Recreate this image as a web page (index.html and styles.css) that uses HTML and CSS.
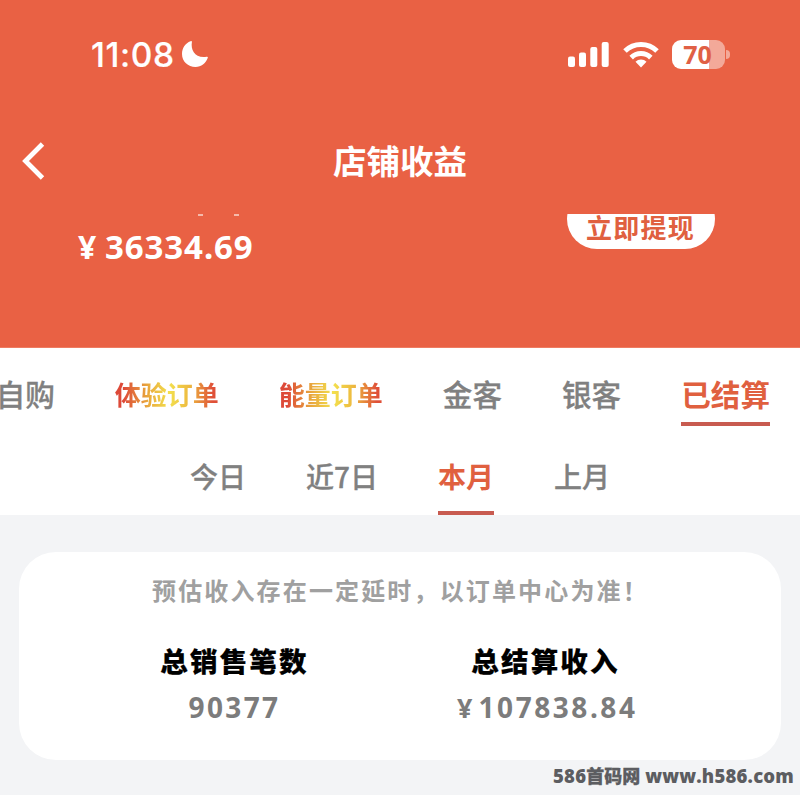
FILE: index.html
```html
<!DOCTYPE html>
<html lang="zh-CN">
<head>
<meta charset="utf-8">
<title>店铺收益</title>
<link rel="stylesheet" href="styles.css">
</head>
<body>
<header class="hero">
  <div class="status">
    <span class="time">11:08</span>
    <svg class="moon" width="28" height="28" viewBox="0 0 28 28"><path d="M9.500 1.200Q11 0.500 10.900 2C9.500 10 14 18.500 25.500 16.800Q27.400 16.500 26.700 18C24.500 23.500 20.500 27 14.500 27C7 27 1 21.500 1 14C1 8 4.500 3 9.500 1.200Z" fill="#fff"/></svg>
    <svg class="signal" width="42" height="26" viewBox="0 0 42 26" fill="#fff"><rect x="0" y="15.500" width="7" height="10.500" rx="2"/><rect x="11" y="11.500" width="7" height="14.500" rx="2"/><rect x="22.300" y="6" width="7" height="20" rx="2"/><rect x="33.700" y="1" width="7" height="25" rx="2"/></svg>
    <svg class="wifi" width="36" height="27" viewBox="0 0 36 27" fill="none" stroke="#fff" stroke-width="5"><path d="M2 10a22.800 22.800 0 0 1 32 0"/><path d="M8.200 16.600a14 14 0 0 1 19.600 0"/><path d="M18 26.500l-5.500-5.700a7.600 7.600 0 0 1 11 0z" fill="#fff" stroke="none"/></svg>
    <div class="battery"><span>70</span></div>
    <i class="battery-tip"></i>
  </div>
  <nav class="navbar">
    <svg class="back" width="24" height="38" viewBox="0 0 24 38"><path d="M20.500 2L3.500 19l17 17" fill="none" stroke="#fff" stroke-width="4.800"/></svg>
    <h1>店铺收益</h1>
  </nav>
  <section class="balance">
    <div class="amount"><div class="ticks"><i></i><i></i></div><div class="money"><span class="yen">¥</span>36334.69</div></div>
    <div class="withdraw-clip"><button class="withdraw">立即提现</button></div>
  </section>
</header>
<section class="filters">
  <div class="tabs">
    <span>自购</span><span class="gold">体验订单</span><span class="gold">能量订单</span><span>金客</span><span>银客</span><span class="active">已结算</span>
  </div>
  <div class="periods">
    <span>今日</span><span>近<b class="digit">7</b>日</span><span class="active">本月</span><span>上月</span>
  </div>
</section>
<main class="card">
  <p class="notice">预估收入存在一定延时，以订单中心为准！</p>
  <div class="stats">
    <div class="stat"><h2>总销售笔数</h2><div class="value">90377</div></div>
    <div class="stat"><h2>总结算收入</h2><div class="value wide"><span class="yen">¥</span>107838.84</div></div>
  </div>
</main>
<footer class="mark"><span>586<b class="han">首码网</b></span><span class="site">www.h586.com</span></footer>
</body>
</html>
```
FILE: styles.css
```css
* { box-sizing: border-box; margin: 0; padding: 0; }
body {
  width: 800px; height: 795px; overflow: hidden; background: #f3f4f6;
  font-family: "Noto Sans CJK SC", sans-serif;
}
.hero { height: 348px; background: #e96144; color: #fff; border-bottom: 1px solid #ee7c62; }
.status { display: flex; align-items: center; height: 108px; padding-left: 91px; }
.time { width: 89px; font: 500 33.500px/40px Inter, sans-serif; letter-spacing: 0.600px; padding-top: 1px; -webkit-text-stroke: 0.200px #fff; }
.moon { margin-left: 1px; }
.signal { margin-left: 359px; }
.wifi { margin-left: 13px; }
.battery {
  width: 53px; height: 29px; margin-left: 13px; padding-right: 2px; border-radius: 9px;
  background: linear-gradient(90deg, #fff 37px, #f3a999 37px);
  color: #e06045; font: 700 25px/28px "Open Sans", sans-serif; text-align: center;
}
.battery-tip { width: 4px; height: 9px; margin-left: 1px; border-radius: 0 5px 5px 0; background: #f3a999; }
.navbar { display: flex; align-items: center; height: 106px; }
.back { margin-left: 22px; }
.navbar h1 { width: 708px; margin-top: -2px; text-align: center; font-size: 33.500px; line-height: 48px; font-weight: 700; }
.balance { display: flex; justify-content: space-between; padding: 0 85px 0 78px; }
.ticks { display: flex; gap: 31px; height: 13px; padding-left: 120px; }
.ticks i { width: 5px; height: 2px; background: #f5b9aa; }
.money { font: 700 33px/40px "Noto Sans", sans-serif; letter-spacing: 0.900px; white-space: nowrap; }
.money .yen { display: inline-block; width: 27px; font-size: 32px; }
.withdraw-clip { height: 35px; width: 148px; overflow: hidden; display: flex; align-items: flex-end; }
.withdraw {
  flex: none; width: 148px; height: 60px; padding: 19px 1px 3px 0; border: 0; border-radius: 30px; background: #fff;
  color: #e0603f; font: 700 26px/38px "Noto Sans CJK SC", sans-serif; letter-spacing: 1.300px;
}
.filters { height: 167px; background: #fff; color: #808080; font-weight: 500; -webkit-text-stroke: 0.300px currentColor; }
.tabs { display: flex; justify-content: flex-end; gap: 60px; height: 78px; padding: 24px 30px 0 0; font-size: 29.600px; line-height: 44px; white-space: nowrap; }
.tabs span { height: 54px; }
.tabs .gold {
  font-size: 26px; font-weight: 700; color: transparent; -webkit-text-stroke: 0;
  background: linear-gradient(90deg, #dd4938 8%, #e8a33c 30%, #f3e04d 52%, #edb83f 72%, #df5038 94%);
  -webkit-background-clip: text; background-clip: text;
}
.filters .active { color: #e0603f; font-weight: 700; border-bottom: 4px solid #c85b50; -webkit-text-stroke: 0; }
.periods { display: flex; justify-content: center; gap: 60px; height: 89px; padding-top: 29px; font-size: 28px; line-height: 42px; }
.periods span { height: 60px; }
.digit { font-size: 28px; font-weight: 500; line-height: 1; }
.card { width: 762px; height: 208px; margin: 37px 0 0 19px; border-radius: 37px; background: #fff; }
.notice { padding: 20px 0 0 133px; font-size: 24px; line-height: 36px; font-weight: 700; letter-spacing: 2.150px; color: #a0a0a0; white-space: nowrap; }
.stats { display: flex; padding: 32px 0 0 60px; }
.stat { width: 311px; text-align: center; }
.stat h2 { font-size: 27.500px; line-height: 40px; font-weight: 900; letter-spacing: 2.200px; color: #000; -webkit-text-stroke: 0.200px #000; }
.value { margin-top: 7px; font: 700 28px/40px "Noto Sans", sans-serif; letter-spacing: 2.350px; color: #7c7c7c; }
.value.wide { letter-spacing: 2.550px; }
.value .yen { display: inline-block; width: 25px; font-size: 27px; }
.mark { display: flex; justify-content: flex-end; gap: 5px; padding: 2px 6px 0 0; font: 800 18.500px/28px "Open Sans", sans-serif; letter-spacing: 0.200px; color: #5c5d61; white-space: nowrap; }
.mark .han { font: 900 18px/1 "Noto Sans CJK SC", sans-serif; letter-spacing: 0; -webkit-text-stroke: 0.300px #5c5d61; }
```
